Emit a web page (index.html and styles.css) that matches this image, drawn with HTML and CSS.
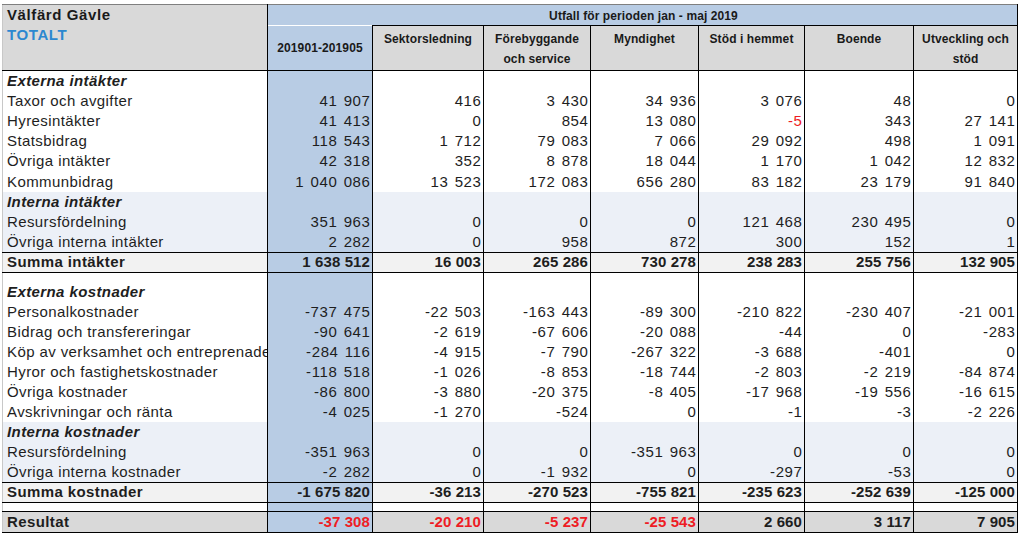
FILE: index.html
```html
<!DOCTYPE html>
<html lang="sv">
<head>
<meta charset="utf-8">
<title>Välfärd Gävle – Totalt</title>
<link rel="stylesheet" href="styles.css">
</head>
<body>
<table class="report">
  <colgroup>
    <col class="c-label">
    <col class="c-total">
    <col class="c-u1">
    <col class="c-u2">
    <col class="c-u3">
    <col class="c-u4">
    <col class="c-u5">
    <col class="c-u6">
  </colgroup>
  <thead>
    <tr class="h1">
      <th class="corner" rowspan="2">
        <div class="org">Välfärd Gävle</div>
        <div class="totalt">TOTALT</div>
      </th>
      <th class="period" colspan="7">Utfall för perioden jan - maj 2019</th>
    </tr>
    <tr class="h2">
      <th class="total-h">201901-201905</th>
      <th>Sektorsledning</th>
      <th>Förebyggande<br>och service</th>
      <th>Myndighet</th>
      <th>Stöd i hemmet</th>
      <th>Boende</th>
      <th>Utveckling och<br>stöd</th>
    </tr>
  </thead>
  <tbody class="block1">
    <tr class="sec"><td class="label">Externa intäkter</td><td class="total"></td><td></td><td></td><td></td><td></td><td></td><td></td></tr>
    <tr><td class="label">Taxor och avgifter</td><td class="num total">41 907</td><td class="num">416</td><td class="num">3 430</td><td class="num">34 936</td><td class="num">3 076</td><td class="num">48</td><td class="num">0</td></tr>
    <tr><td class="label">Hyresintäkter</td><td class="num total">41 413</td><td class="num">0</td><td class="num">854</td><td class="num">13 080</td><td class="num neg">-5</td><td class="num">343</td><td class="num">27 141</td></tr>
    <tr><td class="label">Statsbidrag</td><td class="num total">118 543</td><td class="num">1 712</td><td class="num">79 083</td><td class="num">7 066</td><td class="num">29 092</td><td class="num">498</td><td class="num">1 091</td></tr>
    <tr><td class="label">Övriga intäkter</td><td class="num total">42 318</td><td class="num">352</td><td class="num">8 878</td><td class="num">18 044</td><td class="num">1 170</td><td class="num">1 042</td><td class="num">12 832</td></tr>
    <tr><td class="label">Kommunbidrag</td><td class="num total">1 040 086</td><td class="num">13 523</td><td class="num">172 083</td><td class="num">656 280</td><td class="num">83 182</td><td class="num">23 179</td><td class="num">91 840</td></tr>
    <tr class="sec int"><td class="label">Interna intäkter</td><td class="total"></td><td></td><td></td><td></td><td></td><td></td><td></td></tr>
    <tr class="int"><td class="label">Resursfördelning</td><td class="num total">351 963</td><td class="num">0</td><td class="num">0</td><td class="num">0</td><td class="num">121 468</td><td class="num">230 495</td><td class="num">0</td></tr>
    <tr class="int"><td class="label">Övriga interna intäkter</td><td class="num total">2 282</td><td class="num">0</td><td class="num">958</td><td class="num">872</td><td class="num">300</td><td class="num">152</td><td class="num">1</td></tr>
    <tr class="sum"><td class="label">Summa intäkter</td><td class="num total">1 638 512</td><td class="num">16 003</td><td class="num">265 286</td><td class="num">730 278</td><td class="num">238 283</td><td class="num">255 756</td><td class="num">132 905</td></tr>
  </tbody>
  <tbody class="block2">
    <tr class="gap gap1"><td></td><td class="total"></td><td></td><td></td><td></td><td></td><td></td><td></td></tr>
    <tr class="sec"><td class="label">Externa kostnader</td><td class="total"></td><td></td><td></td><td></td><td></td><td></td><td></td></tr>
    <tr><td class="label">Personalkostnader</td><td class="num total">-737 475</td><td class="num">-22 503</td><td class="num">-163 443</td><td class="num">-89 300</td><td class="num">-210 822</td><td class="num">-230 407</td><td class="num">-21 001</td></tr>
    <tr><td class="label">Bidrag och transfereringar</td><td class="num total">-90 641</td><td class="num">-2 619</td><td class="num">-67 606</td><td class="num">-20 088</td><td class="num">-44</td><td class="num">0</td><td class="num">-283</td></tr>
    <tr><td class="label">Köp av verksamhet och entreprenader</td><td class="num total">-284 116</td><td class="num">-4 915</td><td class="num">-7 790</td><td class="num">-267 322</td><td class="num">-3 688</td><td class="num">-401</td><td class="num">0</td></tr>
    <tr><td class="label">Hyror och fastighetskostnader</td><td class="num total">-118 518</td><td class="num">-1 026</td><td class="num">-8 853</td><td class="num">-18 744</td><td class="num">-2 803</td><td class="num">-2 219</td><td class="num">-84 874</td></tr>
    <tr><td class="label">Övriga kostnader</td><td class="num total">-86 800</td><td class="num">-3 880</td><td class="num">-20 375</td><td class="num">-8 405</td><td class="num">-17 968</td><td class="num">-19 556</td><td class="num">-16 615</td></tr>
    <tr><td class="label">Avskrivningar och ränta</td><td class="num total">-4 025</td><td class="num">-1 270</td><td class="num">-524</td><td class="num">0</td><td class="num">-1</td><td class="num">-3</td><td class="num">-2 226</td></tr>
    <tr class="sec int"><td class="label">Interna kostnader</td><td class="total"></td><td></td><td></td><td></td><td></td><td></td><td></td></tr>
    <tr class="int"><td class="label">Resursfördelning</td><td class="num total">-351 963</td><td class="num">0</td><td class="num">0</td><td class="num">-351 963</td><td class="num">0</td><td class="num">0</td><td class="num">0</td></tr>
    <tr class="int"><td class="label">Övriga interna kostnader</td><td class="num total">-2 282</td><td class="num">0</td><td class="num">-1 932</td><td class="num">0</td><td class="num">-297</td><td class="num">-53</td><td class="num">0</td></tr>
    <tr class="sum"><td class="label">Summa kostnader</td><td class="num total">-1 675 820</td><td class="num">-36 213</td><td class="num">-270 523</td><td class="num">-755 821</td><td class="num">-235 623</td><td class="num">-252 639</td><td class="num">-125 000</td></tr>
    <tr class="gap gap2"><td></td><td class="total"></td><td></td><td></td><td></td><td></td><td></td><td></td></tr>
    <tr class="res"><td class="label">Resultat</td><td class="num total neg">-37 308</td><td class="num neg">-20 210</td><td class="num neg">-5 237</td><td class="num neg">-25 543</td><td class="num">2 660</td><td class="num">3 117</td><td class="num">7 905</td></tr>
  </tbody>
</table>
</body>
</html>
```

FILE: styles.css
```css
html, body {
  margin: 0;
  padding: 0;
  background: #ffffff;
}

body {
  font-family: "Liberation Sans", Arial, sans-serif;
  color: #1e1e1e;
}

.report {
  border-collapse: collapse;
  table-layout: fixed;
  width: 1016px;
  margin: 4px 0 0 2px;
  border-top: 1px solid #7f7f7f;
  border-left: 1px solid #c8c8c8;
  border-right: 1px solid #000000;
  border-bottom: 1px solid #000000;
  font-size: 15px;
}

.c-label { width: 265px; }
.c-total { width: 105px; }
.c-u1 { width: 111px; }
.c-u2 { width: 107px; }
.c-u3 { width: 108px; }
.c-u4 { width: 106px; }
.c-u5 { width: 109px; }
.c-u6 { width: 104px; }

.report td,
.report th {
  padding: 0 2px 0 4px;
  border-right: 1px solid #000000;
  white-space: nowrap;
  overflow: hidden;
  line-height: 18px;
}

/* Header */
.report thead th {
  font-size: 12px;
  font-weight: bold;
  color: #1a1a1a;
  letter-spacing: 0.1px;
}

.h1 { height: 21px; }
.h2 { height: 45px; }

.corner {
  background: #d9d9d9;
  vertical-align: top;
  text-align: left;
  padding-top: 3px;
  border-bottom: 1px solid #000000;
}

.report thead th.corner {
  font-size: 15px;
  line-height: 20px;
  letter-spacing: 0.6px;
}

.totalt {
  color: #2b88d0;
}

.period {
  background: #b8cce4;
  text-align: center;
  vertical-align: bottom;
}

.h2 th {
  background: #d9d9d9;
  border-top: 1px solid #000000;
  border-bottom: 1px solid #000000;
  vertical-align: top;
  text-align: center;
}

.report .h2 th {
  line-height: 20px;
  padding: 3px 2px 0 2px;
}

.h2 th.total-h {
  background: #b8cce4;
  border-top: none;
  vertical-align: middle;
  padding-top: 0;
}

/* Body */
.block1 tr { height: 20.2px; }
.block2 tr { height: 20px; }

.report td.label {
  text-align: left;
  letter-spacing: 0.4px;
}

.report td.num {
  text-align: right;
  letter-spacing: 0.6px;
  word-spacing: 1.5px;
  padding-right: 1.5px;
}

.report .sum td.num,
.report .res td.num {
  letter-spacing: 0.1px;
  word-spacing: 0;
  padding-right: 2px;
}

.report td.total { background: #b8cce4; }

.sec .label {
  font-weight: bold;
  font-style: italic;
}

.int td { background: #ecf0f7; }

.sum td {
  background: #f2f2f2;
  font-weight: bold;
  border-top: 1px solid #000000;
  border-bottom: 1px solid #000000;
}

.block2 .gap1 { height: 10px; }
.block2 .gap2 { height: 9px; }

.res td {
  background: #d9d9d9;
  font-weight: bold;
  border-top: 1px solid #000000;
  height: 20px;
}

.neg { color: #ee1c24; }
```
